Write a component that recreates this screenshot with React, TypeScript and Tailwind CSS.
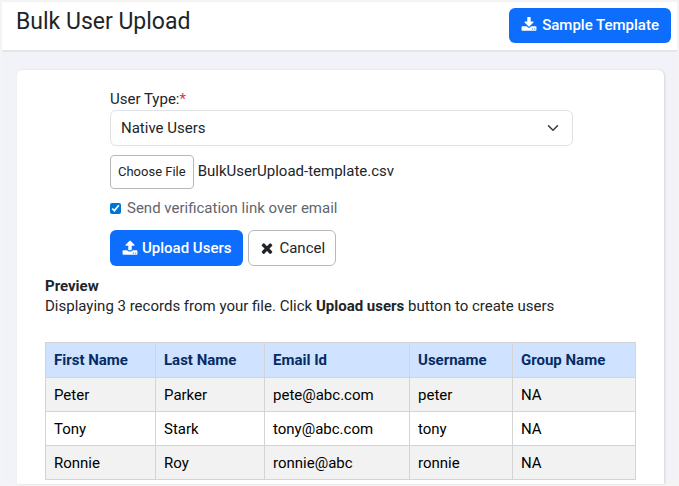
import { useRef, useState } from "react";

const DOWNLOAD =
  "M1344 1344q0-26-19-45t-45-19-45 19-19 45 19 45 45 19 45-19 19-45zm256 0q0-26-19-45t-45-19-45 19-19 45 19 45 45 19 45-19 19-45zm128-224v320q0 40-28 68t-68 28h-1472q-40 0-68-28t-28-68v-320q0-40 28-68t68-28h465l135 136q58 56 136 56t136-56l136-136h464q40 0 68 28t28 68zm-325-569q17 41-14 70l-448 448q-18 19-45 19t-45-19l-448-448q-31-29-14-70 17-39 59-39h256v-448q0-26 19-45t45-19h256q26 0 45 19t19 45v448h256q42 0 59 39z";
const UPLOAD =
  "M1344 1472q0-26-19-45t-45-19-45 19-19 45 19 45 45 19 45-19 19-45zm256 0q0-26-19-45t-45-19-45 19-19 45 19 45 45 19 45-19 19-45zm128-224v320q0 40-28 68t-68 28h-1472q-40 0-68-28t-28-68v-320q0-40 28-68t68-28h427q21 56 70.5 92t110.5 36h256q61 0 110.5-36t70.5-92h427q40 0 68 28t28 68zm-325-648q-17 40-59 40h-256v448q0 26-19 45t-45 19h-256q-26 0-45-19t-19-45v-448h-256q-42 0-59-40-17-39 14-70l448-448q18-19 45-19t45 19l448 448q31 31 14 70z";
const TIMES =
  "M1490 1322q0 40-28 68l-136 136q-28 28-68 28t-68-28l-294-294-294 294q-28 28-68 28t-68-28l-136-136q-28-28-28-68t28-68l294-294-294-294q-28-28-28-68t28-68l136-136q28-28 68-28t68 28l294 294 294-294q28-28 68-28t68 28l136 136q28 28 28 68t-28 68l-294 294 294 294q28 28 28 68z";

function Icon({ d }: { d: string }) {
  return (
    <svg viewBox="0 0 1792 1792" className="size-4" fill="currentColor" aria-hidden="true">
      <path d={d} />
    </svg>
  );
}

const columns = [
  { name: "First Name", width: "w-[110px]" },
  { name: "Last Name", width: "w-[109px]" },
  { name: "Email Id", width: "w-[145px]" },
  { name: "Username", width: "w-[103px]" },
  { name: "Group Name", width: "w-auto" },
];

const records = [
  ["Peter", "Parker", "pete@abc.com", "peter", "NA"],
  ["Tony", "Stark", "tony@abc.com", "tony", "NA"],
  ["Ronnie", "Roy", "ronnie@abc", "ronnie", "NA"],
];

export default function App() {
  const picker = useRef<HTMLInputElement>(null);
  const [fileName, setFileName] = useState("BulkUserUpload-template.csv");

  return (
    <div className="flex min-h-screen flex-col border-2 border-[#f4f4f4] bg-[#f2f3f8] font-['Roboto',sans-serif] text-[15px] leading-5 text-[#212529]">
      <header className="flex items-start justify-between border-b-2 border-[#e4e5e8] bg-white pt-1 pr-1.5 pb-[7px] pl-3.5">
        <h1 className="text-[23px] leading-8">Bulk User Upload</h1>
        <button
          type="button"
          className="mt-0.5 flex h-[35px] items-center gap-[5px] rounded-md bg-[#0d6efd] px-3 pb-0.5 font-medium text-white"
        >
          <Icon d={DOWNLOAD} />
          Sample Template
        </button>
      </header>

      <main className="mr-[13px] ml-[15px] mt-[18px] grow rounded-t-md bg-white px-7 pt-[19px] shadow-[1px_0_2px_#d5d6dc]">
        <form className="mr-[63px] ml-[65px]" onSubmit={(e) => e.preventDefault()}>
          <label htmlFor="user-type" className="block">
            User Type:<span className="text-[#dc3545]">*</span>
          </label>
          <div className="mt-px grid">
            <select
              id="user-type"
              className="col-start-1 row-start-1 h-9 w-full appearance-none rounded-md border border-[#dee2e6] bg-white px-2.5"
            >
              <option>Native Users</option>
            </select>
            <svg
              viewBox="0 0 16 16"
              className="pointer-events-none col-start-1 row-start-1 mr-3.5 size-3 self-center justify-self-end"
              fill="none"
              stroke="#343a40"
              strokeWidth="2"
              strokeLinecap="round"
              strokeLinejoin="round"
              aria-hidden="true"
            >
              <path d="m2 5 6 6 6-6" />
            </svg>
          </div>

          <div className="mt-[9px] flex items-start gap-1">
            <input
              ref={picker}
              type="file"
              accept=".csv"
              aria-label="User file"
              className="hidden"
              onChange={(e) => setFileName(e.target.files?.[0]?.name ?? fileName)}
            />
            <button
              type="button"
              onClick={() => picker.current?.click()}
              className="h-[34px] rounded-sm border border-[#b4b9be] bg-white px-[7px] text-[13px]"
            >
              Choose File
            </button>
            <span className="pt-1.5">{fileName}</span>
          </div>

          <label className="mt-[9px] flex items-center gap-1.5 text-[#5f666d]">
            <input type="checkbox" defaultChecked className="size-[11px] accent-[#0075d5]" />
            Send verification link over email
          </label>

          <div className="mt-3 flex gap-[5px]">
            <button
              type="submit"
              className="flex h-9 items-center gap-1 rounded-md bg-[#0d6efd] px-3 font-medium text-white"
            >
              <Icon d={UPLOAD} />
              Upload Users
            </button>
            <button
              type="button"
              className="flex h-9 items-center gap-1 rounded-md border border-[#b4b9be] bg-white px-2.5"
            >
              <Icon d={TIMES} />
              Cancel
            </button>
          </div>
        </form>

        <h2 className="mt-2.5 font-bold">Preview</h2>
        <p>
          Displaying 3 records from your file. Click <strong>Upload users</strong> button to create users
        </p>

        <table className="mt-[26px] w-full table-fixed border-collapse text-left text-black">
          <thead>
            <tr className="bg-[#cfe2ff] text-[#052c65]">
              {columns.map((c) => (
                <th key={c.name} scope="col" className={`border border-[#d3d4d6] px-2 py-[7px] font-bold ${c.width}`}>
                  {c.name}
                </th>
              ))}
            </tr>
          </thead>
          <tbody>
            {records.map((r) => (
              <tr key={r[0]} className="odd:bg-[#f2f2f2]">
                {r.map((v, i) => (
                  <td key={i} className="border border-[#d3d4d6] px-2 pt-[7px] pb-1.5">
                    {v}
                  </td>
                ))}
              </tr>
            ))}
          </tbody>
        </table>
      </main>
    </div>
  );
}
